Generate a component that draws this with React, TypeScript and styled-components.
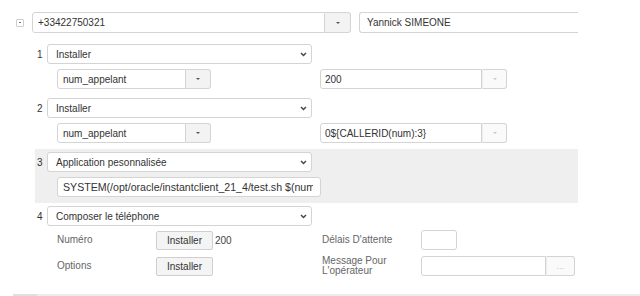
import React from "react";
import styled, { createGlobalStyle } from "styled-components";

const GlobalStyle = createGlobalStyle`
  body {
    margin: 0;
    background: #fff;
    font-family: "Liberation Sans", Arial, sans-serif;
    color: #333;
  }
`;

const Page = styled.div`
  width: 640px;
  height: 296px;
  box-sizing: border-box;
  padding-top: 12px;
  display: flex;
  flex-direction: column;
  overflow: hidden;
`;

const Header = styled.div`
  width: 578px;
  height: 21px;
  display: flex;
  align-items: center;
  padding-left: 16px;
  box-sizing: border-box;
  overflow: hidden;
`;

const Toggle = styled.div`
  width: 8px;
  height: 8px;
  flex-shrink: 0;
  box-sizing: border-box;
  border: 1px solid #cfcfcf;
  border-radius: 1px;
  margin-right: 8px;
  display: flex;
  align-items: center;
  justify-content: center;
  &::after {
    content: "";
    width: 2px;
    height: 1px;
    background: #777;
  }
`;

const Group = styled.div`
  display: flex;
  flex-shrink: 0;
`;

const Input = styled.div<{ $w: number; $h?: number; $joined?: boolean; $pad?: number }>`
  width: ${({ $w }) => $w}px;
  height: ${({ $h }) => $h ?? 20}px;
  box-sizing: border-box;
  border: 1px solid #d4d4d4;
  border-radius: ${({ $joined }) => ($joined ? "3px 0 0 3px" : "3px")};
  background: #fff;
  display: flex;
  align-items: center;
  padding-left: ${({ $pad }) => $pad ?? 5}px;
  padding-right: 7px;
  font-size: 10px;
  color: #333;
  white-space: nowrap;
  overflow: hidden;
  flex-shrink: 0;
`;

const InputText = styled.span`
  display: block;
  overflow: hidden;
  min-width: 0;
  flex: 1;
  font-size: 10.6px;
`;

const CaretButton = styled.div<{ $w: number; $h?: number; $muted?: boolean }>`
  width: ${({ $w }) => $w}px;
  height: ${({ $h }) => $h ?? 20}px;
  box-sizing: border-box;
  border: 1px solid #d4d4d4;
  border-left: ${({ $muted }) => ($muted ? "1px solid #ececec" : "none")};
  border-radius: 0 3px 3px 0;
  background: ${({ $muted }) => ($muted ? "#fafafa" : "#f3f3f3")};
  display: flex;
  align-items: center;
  justify-content: center;
  flex-shrink: 0;
  &::after {
    content: "";
    border-left: 2px solid transparent;
    border-right: 2px solid transparent;
    border-top: 2px solid ${({ $muted }) => ($muted ? "#c8c8c8" : "#555")};
  }
`;

const NameInput = styled(Input)`
  margin-left: 8px;
  border-right: none;
`;

const Steps = styled.div`
  margin-top: 8px;
  margin-left: 35px;
  width: 543px;
`;

const Step = styled.div<{ $shaded?: boolean }>`
  padding: 3px 0 6px 2px;
  background: ${({ $shaded }) => ($shaded ? "#efefef" : "transparent")};
`;

const StepHead = styled.div`
  display: flex;
  align-items: center;
`;

const Num = styled.span`
  width: 10px;
  font-size: 10px;
  color: #333;
`;

const Select = styled.div`
  width: 265px;
  height: 20px;
  box-sizing: border-box;
  border: 1px solid #d4d4d4;
  border-radius: 3px;
  background: #fff;
  display: flex;
  align-items: center;
  justify-content: space-between;
  padding: 0 4px 0 8px;
  font-size: 10px;
  color: #333;
`;

const SubRow = styled.div`
  margin-top: 5px;
  margin-left: 20px;
  display: grid;
  grid-template-columns: 263px auto;
  align-items: center;
`;

const Fields = styled.div`
  margin-left: 20px;
  display: flex;
  flex-direction: column;
`;

const FieldRow = styled.div<{ $first?: boolean }>`
  margin-top: ${({ $first }) => ($first ? 4 : 6)}px;
  display: grid;
  grid-template-columns: 99px 166px 99px auto;
  align-items: center;
  height: 20px;
`;

const Label = styled.span`
  font-size: 10px;
  line-height: 10px;
  color: #666;
`;

const Cell = styled.div`
  display: flex;
  align-items: center;
`;

const Button = styled.div`
  width: 57px;
  height: 19px;
  box-sizing: border-box;
  border: 1px solid #cfcfcf;
  border-radius: 2px;
  background: #f4f4f4;
  display: flex;
  align-items: center;
  justify-content: center;
  font-size: 10px;
  color: #333;
`;

const Value = styled.span`
  margin-left: 2px;
  font-size: 10px;
  color: #444;
`;

const DotsButton = styled.div`
  width: 29px;
  height: 20px;
  box-sizing: border-box;
  border: 1px solid #d4d4d4;
  border-left: 1px solid #ececec;
  border-radius: 0 3px 3px 0;
  background: #fafafa;
  display: flex;
  align-items: center;
  justify-content: center;
  font-size: 7px;
  color: #999;
  letter-spacing: 0.5px;
`;

const Footer = styled.div`
  margin-top: auto;
  height: 2px;
  margin-left: 13px;
  background: #ececec;
  display: flex;
  &::before {
    content: "";
    width: 24px;
    background: #e0e0e0;
  }
`;

const Chevron = () => (
  <svg width="7" height="5" viewBox="0 0 7 5">
    <path d="M1 1 L3.5 3.6 L6 1" fill="none" stroke="#444" strokeWidth="1.4" />
  </svg>
);

type StepData = {
  num: number;
  action: string;
  left: string;
  right: string;
};

const installSteps: StepData[] = [
  { num: 1, action: "Installer", left: "num_appelant", right: "200" },
  { num: 2, action: "Installer", left: "num_appelant", right: "0${CALLERID(num):3}" },
];

export default function App() {
  return (
    <>
      <GlobalStyle />
      <Page>
        <Header>
          <Toggle />
          <Group>
            <Input $w={293} $h={21} $joined>
              +33422750321
            </Input>
            <CaretButton $w={26} $h={21} />
          </Group>
          <NameInput $w={240} $h={21} $pad={7}>
            Yannick SIMEONE
          </NameInput>
        </Header>

        <Steps>
          {installSteps.map((s) => (
            <Step key={s.num}>
              <StepHead>
                <Num>{s.num}</Num>
                <Select>
                  {s.action}
                  <Chevron />
                </Select>
              </StepHead>
              <SubRow>
                <Group>
                  <Input $w={129} $joined>
                    {s.left}
                  </Input>
                  <CaretButton $w={25} />
                </Group>
                <Group>
                  <Input $w={162} $joined $pad={4}>
                    {s.right}
                  </Input>
                  <CaretButton $w={25} $muted />
                </Group>
              </SubRow>
            </Step>
          ))}

          <Step $shaded>
            <StepHead>
              <Num>3</Num>
              <Select>
                Application pesonnalisée
                <Chevron />
              </Select>
            </StepHead>
            <SubRow>
              <Input $w={264}>
                <InputText>SYSTEM(/opt/oracle/instantclient_21_4/test.sh $(num):3)</InputText>
              </Input>
            </SubRow>
          </Step>

          <Step>
            <StepHead>
              <Num>4</Num>
              <Select>
                Composer le téléphone
                <Chevron />
              </Select>
            </StepHead>
            <Fields>
              <FieldRow $first>
                <Label>Numéro</Label>
                <Cell>
                  <Button>Installer</Button>
                  <Value>200</Value>
                </Cell>
                <Label>Délais D'attente</Label>
                <Input $w={36} />
              </FieldRow>
              <FieldRow>
                <Label>Options</Label>
                <Cell>
                  <Button>Installer</Button>
                </Cell>
                <Label>
                  Message Pour
                  <br />
                  L'opérateur
                </Label>
                <Group>
                  <Input $w={125} $joined />
                  <DotsButton>...</DotsButton>
                </Group>
              </FieldRow>
            </Fields>
          </Step>
        </Steps>
        <Footer />
      </Page>
    </>
  );
}
